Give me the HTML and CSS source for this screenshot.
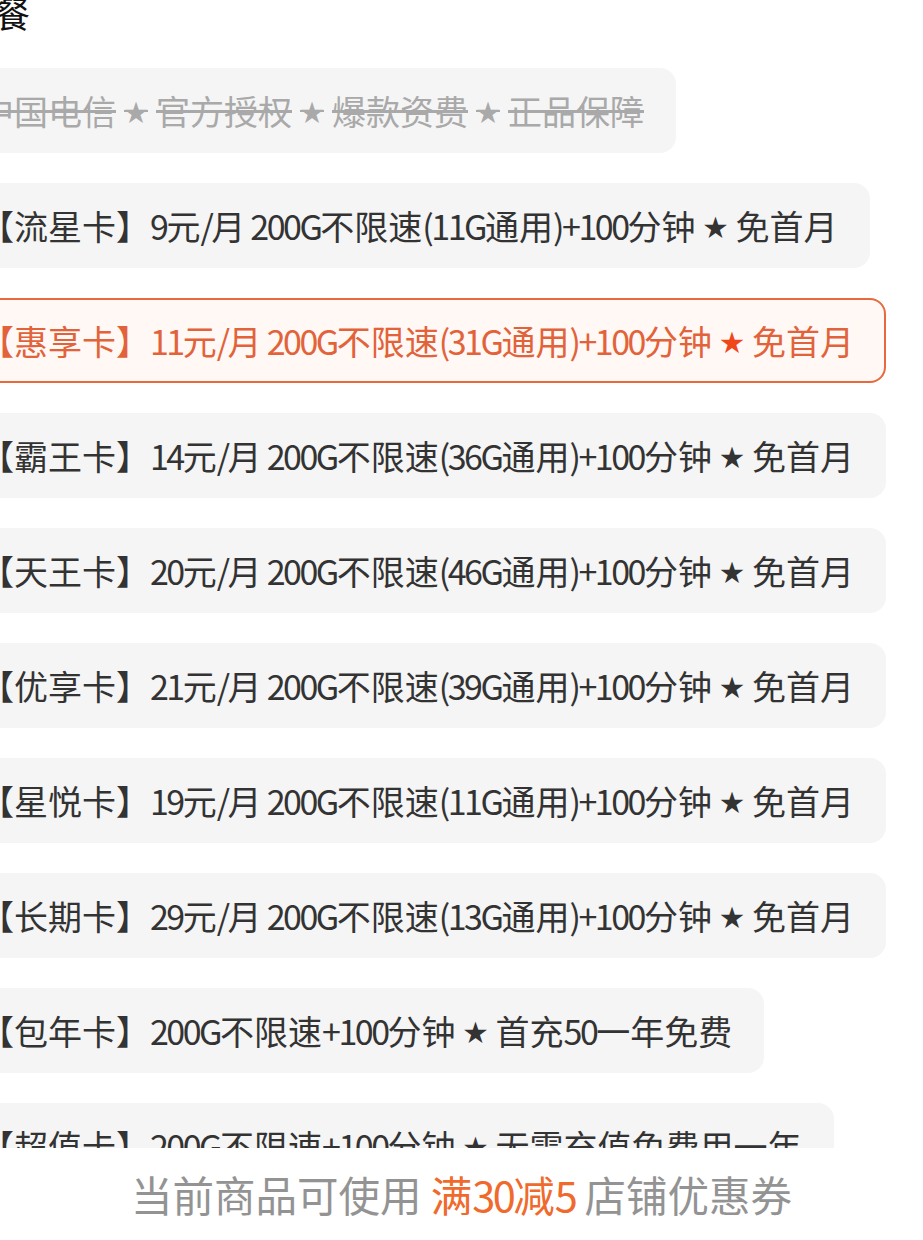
FILE: index.html
```html
<!DOCTYPE html>
<html lang="zh-CN">
<head>
<meta charset="utf-8">
<title>套餐</title>
<link rel="stylesheet" href="styles.css">
</head>
<body>
<div class="page">
  <div class="scroll">
    <div class="title">套餐</div>
    <div class="chips">
      <div class="chip disabled">中国电信<span class="star">★</span>官方授权<span class="star">★</span>爆款资费<span class="star">★</span>正品保障</div>
      <div class="chip">【流星卡】<span class="n">9</span>元<span class="n">/</span>月<span class="n"> 200G</span>不限速<span class="n">(11G</span>通用<span class="n">)+100</span>分钟<span class="star">★</span>免首月</div>
      <div class="chip active">【惠享卡】<span class="n">11</span>元<span class="n">/</span>月<span class="n"> 200G</span>不限速<span class="n">(31G</span>通用<span class="n">)+100</span>分钟<span class="star">★</span>免首月</div>
      <div class="chip">【霸王卡】<span class="n">14</span>元<span class="n">/</span>月<span class="n"> 200G</span>不限速<span class="n">(36G</span>通用<span class="n">)+100</span>分钟<span class="star">★</span>免首月</div>
      <div class="chip">【天王卡】<span class="n">20</span>元<span class="n">/</span>月<span class="n"> 200G</span>不限速<span class="n">(46G</span>通用<span class="n">)+100</span>分钟<span class="star">★</span>免首月</div>
      <div class="chip">【优享卡】<span class="n">21</span>元<span class="n">/</span>月<span class="n"> 200G</span>不限速<span class="n">(39G</span>通用<span class="n">)+100</span>分钟<span class="star">★</span>免首月</div>
      <div class="chip">【星悦卡】<span class="n">19</span>元<span class="n">/</span>月<span class="n"> 200G</span>不限速<span class="n">(11G</span>通用<span class="n">)+100</span>分钟<span class="star">★</span>免首月</div>
      <div class="chip">【长期卡】<span class="n">29</span>元<span class="n">/</span>月<span class="n"> 200G</span>不限速<span class="n">(13G</span>通用<span class="n">)+100</span>分钟<span class="star">★</span>免首月</div>
      <div class="chip">【包年卡】<span class="n">200G</span>不限速<span class="n">+100</span>分钟<span class="star">★</span>首充<span class="n">50</span>一年免费</div>
      <div class="chip">【超值卡】<span class="n">200G</span>不限速<span class="n">+100</span>分钟<span class="star">★</span>无需充值免费用一年</div>
    </div>
  </div>
  <div class="footer">当前商品可使用 <span class="hl">满<span class="n">30</span>减<span class="n">5</span></span> 店铺优惠券</div>
</div>
</body>
</html>
```

FILE: styles.css
```css
html, body {
  margin: 0;
  padding: 0;
  background: #ffffff;
}
.page {
  width: 923px;
  height: 1240px;
  overflow: hidden;
  display: flex;
  flex-direction: column;
  font-family: "Noto Sans CJK SC", "Noto Sans", sans-serif;
}
.scroll {
  height: 1148px;
  overflow: hidden;
  flex: none;
}
.title {
  font-size: 36px;
  line-height: 40px;
  height: 40px;
  margin-top: -8px;
  margin-left: -42px;
  color: #111;
}
.chips {
  margin-top: 36px;
  margin-left: -52px;
  display: flex;
  flex-direction: column;
  align-items: flex-start;
  gap: 30px;
}
.chip {
  box-sizing: border-box;
  height: 85px;
  padding: 0 30px;
  display: flex;
  align-items: center;
  white-space: pre;
  background: #f5f5f5;
  border-radius: 16px;
  font-size: 34px;
  color: #333333;
  border: 2px solid transparent;
}
.n {
  letter-spacing: -2.5px;
}
.star {
  font-size: 24px;
  margin: 0 8px;
}
.chip.disabled {
  color: #a9a9a9;
  text-decoration: line-through;
}
.chip.active {
  background: #fff8f5;
  border-color: #e8693f;
  color: #e2623a;
}
.chip.active .star {
  color: #f0461c;
}
.footer {
  flex: 1;
  display: flex;
  align-items: center;
  justify-content: center;
  font-size: 41.5px;
  color: #939393;
  white-space: pre;
}
.footer .hl {
  color: #ef6a2c;
}
```
